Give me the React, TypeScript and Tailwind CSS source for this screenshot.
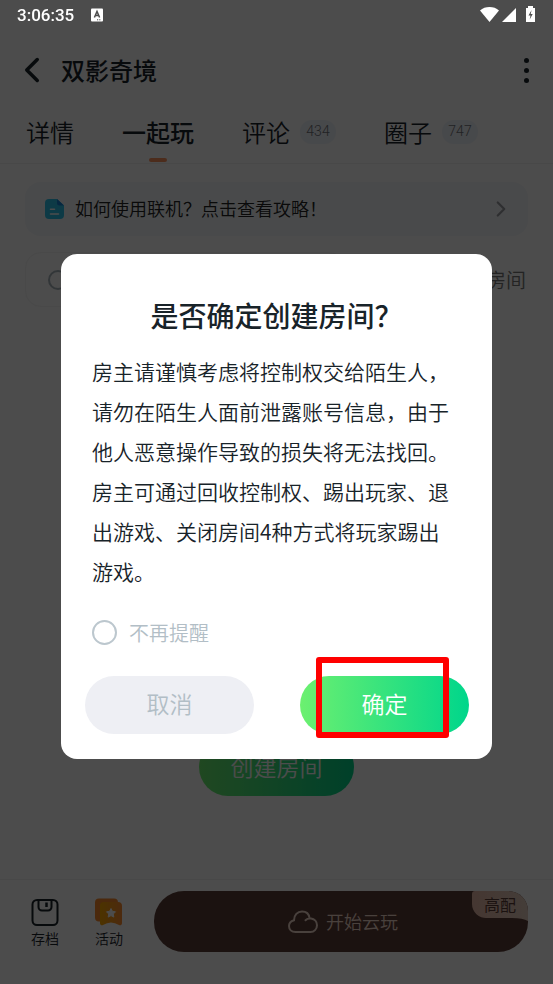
import { ChevronLeft, ChevronRight } from "lucide-react";
import type { ReactNode } from "react";

const CJK = "font-['Noto_Sans_CJK_SC',sans-serif]";

function StatusBar() {
  return (
    <div className="fixed inset-x-0 top-0 z-20 flex h-[30px] items-center justify-between pr-[18px] pl-[17px] text-white">
      <div className="flex items-center gap-[17px]">
        <span className="font-['Roboto',sans-serif] text-[17px] leading-8 font-medium">3:06:35</span>
        <svg width="12" height="14" viewBox="0 0 12 14" aria-hidden="true">
          <rect width="12" height="13" y="0.5" rx="1" fill="#fff" />
          <path d="M3.4 9.5 6 3.5l2.6 6M4.4 7.5h3.2" fill="none" stroke="#4c4c4c" strokeWidth="1.5" />
          <path d="M6 11.8h1.2M8.2 11.8h1.2" stroke="#4c4c4c" strokeWidth="1" />
        </svg>
      </div>
      <div className="flex items-center pb-px" aria-hidden="true">
        <svg width="55" height="17" viewBox="0 0 55 17" fill="#fff">
          <path d="M0 4.4C5-.1 14-.1 19 4.4L9.500 16z" />
          <path d="M36 2v14H22z" />
          <path d="M46 2h2V0h5v2h2v14h-9z" />
          <path d="M51.600 4 48.500 9.500h2l-.8 4 3-5.500h-2z" fill="#4c4c4c" />
        </svg>
      </div>
    </div>
  );
}

function Tab({ label, count, active }: { label: string; count?: string; active?: boolean }) {
  return (
    <button
      type="button"
      className={`relative flex h-10 items-center gap-2.5 text-2xl ${active ? "font-medium" : ""}`}
    >
      {label}
      {count && (
        <span className="flex h-6 w-9 items-center justify-center rounded-full bg-[#eff3fa] font-['Roboto',sans-serif] text-[14px] text-[#6f747a]">
          {count}
        </span>
      )}
      {active && (
        <span className="absolute -bottom-2.5 left-1/2 h-1 w-[18px] -translate-x-1/2 rounded-sm bg-[#ff9560]" />
      )}
    </button>
  );
}

function BarItem({ label, children }: { label: string; children: ReactNode }) {
  return (
    <button type="button" className="flex w-7 flex-col items-center gap-0.5 text-[14px] leading-5 whitespace-nowrap">
      {children}
      {label}
    </button>
  );
}

function Page() {
  return (
    <div className="flex min-h-screen flex-col bg-[#fdfdfd] pt-10 font-[350] text-[#182329]">
      <header className="flex h-[60px] items-center justify-between pr-5 pl-[11px]">
        <div className="flex items-center gap-2">
          <button type="button" aria-label="返回">
            <ChevronLeft size={42} strokeWidth={2} />
          </button>
          <h1 className="text-2xl font-medium">双影奇境</h1>
        </div>
        <button type="button" aria-label="更多" className="flex flex-col gap-[5px] p-1">
          <span className="size-[5px] rounded-full bg-[#182329]" />
          <span className="size-[5px] rounded-full bg-[#182329]" />
          <span className="size-[5px] rounded-full bg-[#182329]" />
        </button>
      </header>

      <nav className="flex h-16 items-center gap-12 border-b border-[#f1f1f1] pl-[26px]">
        <Tab label="详情" />
        <Tab label="一起玩" active />
        <Tab label="评论" count="434" />
        <Tab label="圈子" count="747" />
      </nav>

      <main className="flex flex-1 flex-col px-[25px] pt-[18px]">
        <a href="#guide" className="flex h-[54px] items-center rounded-2xl bg-[#f5f7fb] pr-3.5 pl-5 text-[18px] text-[#222]">
          <svg width="19" height="20" viewBox="0 0 19 20" className="mr-[11px]" aria-hidden="true">
            <path d="M4 0h8l7 6.500V16a4 4 0 0 1-4 4H4a4 4 0 0 1-4-4V4a4 4 0 0 1 4-4z" fill="#2cc4ea" />
            <path d="M12 0l7 6.500h-4.500A2.500 2.500 0 0 1 12 4z" fill="#1683d8" />
            <path d="M5.500 10.300h4M5.500 15h8" stroke="#fff" strokeWidth="1.600" strokeLinecap="round" />
          </svg>
          <span className="flex-1 pb-0.5">如何使用联机？点击查看攻略！</span>
          <ChevronRight size={26} strokeWidth={2} className="text-[#9a9da2]" />
        </a>

        <div className="mt-4 flex h-[55px] items-center justify-between pr-0.5 text-xl text-[#777]">
          <div className="flex h-full w-80 items-center rounded-2xl border border-[#f5f5f5] pl-[22px]">
            <span className="size-5 rounded-full border-2 border-[#a9b5bd]" />
          </div>
          <span>房间</span>
        </div>

        <button
          type="button"
          className="mt-[431px] h-[58px] w-[155px] self-center rounded-full bg-linear-to-r/srgb from-[#6cf070] to-[#00d68b] pb-0.5 text-[23px] text-white"
        >
          创建房间
        </button>
      </main>

      <footer className="flex h-[105px] items-start border-t border-[#f1f1f1] pt-[11px] pr-[25px] pl-[31px]">
        <div className="mr-[31px] flex gap-9 pt-[7px]">
          <BarItem label="存档">
            <svg width="28" height="28" viewBox="0 0 28 28" fill="none" stroke="#182329" strokeWidth="2" aria-hidden="true">
              <rect x="1.500" y="2" width="25" height="25" rx="4.500" />
              <path d="M7.500 2v7a3.500 3.500 0 0 0 3.500 3.500h6A3.500 3.500 0 0 0 20.500 9V2" />
              <path d="M15.500 4.500v4.500" strokeWidth="2.500" />
            </svg>
          </BarItem>
          <BarItem label="活动">
            <svg width="28" height="28" viewBox="0 0 28 28" aria-hidden="true">
              <path d="M4 0.500h15a4 4 0 0 1 4 4v19H4a4 4 0 0 1-4-4V4.500a4 4 0 0 1 4-4z" fill="#fb8a2c" />
              <path d="M9 4h14a4 4 0 0 1 4 4v17a2 2 0 0 1-3 2q-4-2.500-8-2.500T8 27a2 2 0 0 1-3-2V8a4 4 0 0 1 4-4z" fill="url(#gift)" />
              <path d="m16 10.500 1.400 2.800 3.100.5-2.200 2.200.5 3.100-2.800-1.500-2.800 1.500.5-3.100-2.200-2.200 3.100-.5z" fill="#fff" stroke="#fff" strokeLinejoin="round" />
              <defs>
                <linearGradient id="gift">
                  <stop stopColor="#ffac00" />
                  <stop offset="1" stopColor="#ff8b32" />
                </linearGradient>
              </defs>
            </svg>
          </BarItem>
        </div>
        <button
          type="button"
          className="relative flex h-[61px] flex-1 items-center justify-center gap-2 overflow-hidden rounded-[30px] rounded-tr-[20px] bg-[#5d3d37] pl-1 text-[18px] text-[#f3d9cc]"
        >
          <svg width="30" height="24" viewBox="0 0 30 24" fill="none" stroke="#f3d9cc" strokeWidth="2" strokeLinecap="round" aria-hidden="true">
            <path d="M17.500 10.200C19 8.700 21 8.200 23 8.500c3.500.5 6 3.300 6 6.700 0 4-3 6.800-6.500 6.800H7.500C3.500 22 1 19.500 1 16c0-2.800 2-5 5-5.800C6 5 9.500 1.500 14 1.500c4 0 7 2.500 7.500 6.500" />
          </svg>
          开始云玩
          <span className="absolute top-0 right-0 flex h-[30px] w-[56px] justify-center text-base leading-[26px] font-normal text-[#5d3d37]">
            <svg className="absolute inset-0" width="56" height="30" viewBox="0 0 56 30" aria-hidden="true">
              <path d="M3 0h53v30q-5-3-16-3H15A14 14 0 0 1 0 13V3a3 3 0 0 1 3-3z" fill="url(#badge)" />
              <defs>
                <linearGradient id="badge">
                  <stop stopColor="#e6b8a6" />
                  <stop offset="1" stopColor="#e5cdbf" />
                </linearGradient>
              </defs>
            </svg>
            <span className="relative">高配</span>
          </span>
        </button>
      </footer>
    </div>
  );
}

function ConfirmDialog() {
  return (
    <div className="fixed inset-0 z-10 flex items-center bg-black/70 px-[61px] pt-7 font-[350]">
      <div role="dialog" aria-modal="true" aria-labelledby="dialog-title" className="w-full rounded-2xl bg-white pt-10 pb-[25px] text-[#182329]">
        <h2 id="dialog-title" className="text-center text-[28px] leading-[42px] font-medium">
          是否确定创建房间？
        </h2>
        <p className="mt-[15px] px-[31px] text-[21px] leading-10">
          房主请谨慎考虑将控制权交给陌生人，
          <br />
          请勿在陌生人面前泄露账号信息，由于
          <br />
          他人恶意操作导致的损失将无法找回。
          <br />
          房主可通过回收控制权、踢出玩家、退
          <br />
          出游戏、关闭房间4种方式将玩家踢出
          <br />
          游戏。
        </p>
        <label className="mt-[26px] ml-[31px] flex w-fit items-center gap-3 text-xl leading-8 text-[#b2bec6]">
          <input type="checkbox" className="size-[25px] appearance-none rounded-full border-2 border-[#bcc7ce]" />
          不再提醒
        </label>
        <div className="mt-[27px] flex justify-between pr-[23px] pl-6 text-[23px]">
          <button type="button" className="h-[58px] w-[169px] rounded-full bg-[#eeeff4] pb-0.5 text-[#b2bec6]">
            取消
          </button>
          <div className="relative">
            <button type="button" className="h-[58px] w-[169px] rounded-full bg-linear-to-r/srgb from-[#6cf070] to-[#00d68b] pb-0.5 text-white">
              确定
            </button>
            <span className="pointer-events-none absolute -top-[19px] left-4 h-[81px] w-[133px] rounded-[3px] border-6 border-[#ff0000]" />
          </div>
        </div>
      </div>
    </div>
  );
}

export default function App() {
  return (
    <div className={CJK}>
      <Page />
      <StatusBar />
      <ConfirmDialog />
    </div>
  );
}
